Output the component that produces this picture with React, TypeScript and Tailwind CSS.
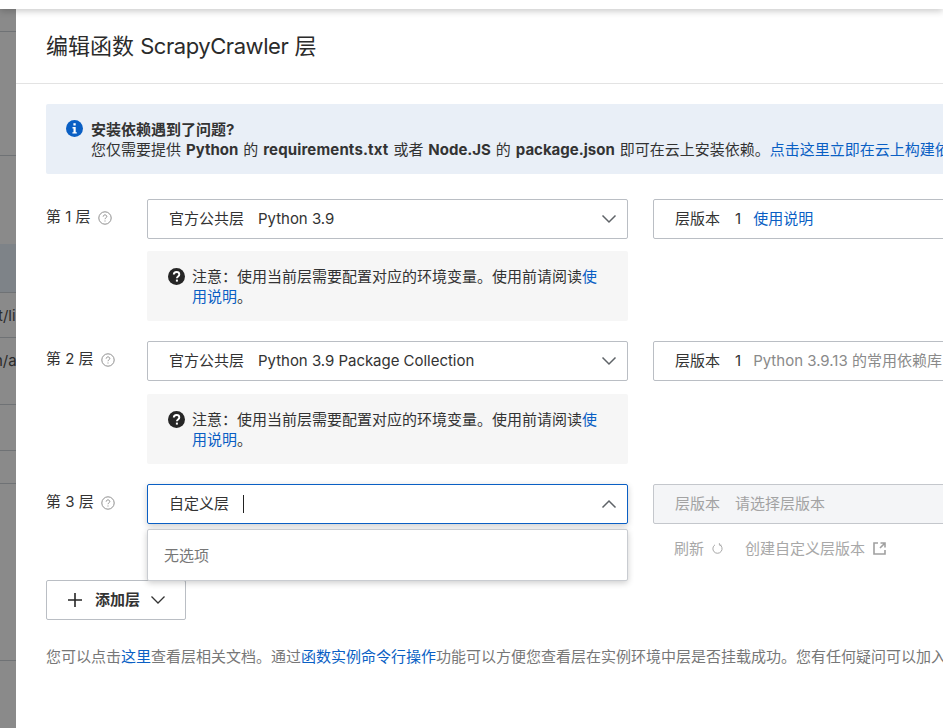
const font = { fontFamily: '"Inter", "Noto Sans CJK SC", sans-serif' }

const Chevron = ({ up = false }: { up?: boolean }) => (
  <svg width="16" height="10" viewBox="0 0 16 10" fill="none" stroke="#5f6368" strokeWidth="1.5">
    <path d={up ? 'M1.5 8.5 8 2l6.5 6.5' : 'M1.5 1.5 8 8l6.5-6.5'} />
  </svg>
)

const HelpDot = () => (
  <svg width="14" height="14" viewBox="0 0 14 14" fill="none" stroke="#8f8f8f" strokeWidth="1">
    <circle cx="7" cy="7" r="6.2" />
    <path d="M5.2 5.6c0-1 .8-1.7 1.8-1.7s1.8.7 1.8 1.6c0 1.3-1.8 1.3-1.8 2.7" />
    <path d="M7 9.5v1" />
  </svg>
)

const QuestionFill = () => (
  <svg width="17" height="17" viewBox="0 0 17 17" className="mt-[1px] shrink-0">
    <circle cx="8.5" cy="8.5" r="8.5" fill="#262626" />
    <path d="M5.8 6.6c0-1.6 1.2-2.6 2.8-2.6s2.7 1 2.7 2.4c0 2-2.4 2-2.4 3.8" fill="none" stroke="#fff" strokeWidth="1.9" />
    <rect x="7.9" y="11.6" width="2" height="2" fill="#fff" />
  </svg>
)

const InfoFill = () => (
  <svg width="17" height="17" viewBox="0 0 17 17" className="shrink-0">
    <circle cx="8.5" cy="8.5" r="8.5" fill="#0a5fc4" />
    <rect x="7.4" y="3.2" width="2.3" height="2.3" fill="#fff" />
    <path d="M6.5 7h3.2v5.2h1.1v1.4H6.4v-1.4h1.1V8.4h-1z" fill="#fff" />
  </svg>
)

const Field = ({ children, className }: { children: React.ReactNode; className: string }) => (
  <div className={`flex h-10 items-center rounded-[2px] border pr-[10px] pl-[21px] text-[15px] whitespace-nowrap ${className}`}>
    {children}
  </div>
)

const Note = ({ className }: { className: string }) => (
  <div className={`flex h-[70px] w-[481px] gap-[7px] rounded-[2px] bg-[#f6f6f6] py-4 pr-5 pl-[21px] text-[15px] leading-5 text-[#333] ${className}`}>
    <QuestionFill />
    <p>
      注意：使用当前层需要配置对应的环境变量。使用前请阅读<a className="text-[#0a5fc4]">使用说明</a>。
    </p>
  </div>
)

type LayerProps = {
  index: number
  kind: string
  name: string
  noteGap: string
  version: React.ReactNode
}

const Layer = ({ index, kind, name, noteGap, version }: LayerProps) => (
  <div className="flex">
    <Label index={index} />
    <div className="w-[481px] shrink-0">
      <Field className="justify-between border-[#babec4] bg-white text-[#333]">
        <span>
          {kind}
          <span className="ml-[14px] tracking-[-0.03px]">{name}</span>
        </span>
        <Chevron />
      </Field>
      <Note className={noteGap} />
    </div>
    <Field className="ml-[25px] w-[481px] shrink-0 border-[#babec4] bg-white text-[#333]">{version}</Field>
  </div>
)

const Label = ({ index }: { index: number }) => (
  <div className="flex h-10 w-[101px] shrink-0 items-center gap-[7px] pb-[3px] text-[15px] text-[#333]">
    第 {index} 层
    <HelpDot />
  </div>
)

const sideRows = [
  { h: 'h-[23px]', line: true },
  { h: 'h-[124px]', line: true },
  { h: 'h-[88px]', line: false },
  { h: 'h-[49px]', line: true, bg: 'bg-[#7e8388]' },
  { h: 'h-[45px]', line: true, text: 't/lib', pad: 'pt-[12px] -ml-[2px]' },
  { h: 'h-[67px]', line: true, text: 'n/a', pad: 'pt-[12px] -ml-[6px]' },
  { h: 'h-[46px]', line: true },
  { h: 'h-[33px]', line: true },
  { h: 'h-[177px]', line: true },
]

export default function App() {
  return (
    <div className="flex h-[728px] w-[943px] flex-col overflow-hidden bg-white" style={font}>
      <div className="relative z-10 h-[9px] shrink-0 bg-white shadow-[0_2px_7px_rgba(0,0,0,0.22)]" />
      <div className="flex min-h-0 flex-1">
        <aside className="w-4 shrink-0 overflow-hidden bg-[#8a8a8a] text-[15px] text-[#2b2b2b]">
          {sideRows.map((row, i) => (
            <div
              key={i}
              className={`${row.h} ${row.line ? 'border-b border-[#6f7275]' : ''} ${row.bg ?? ''} ${row.pad ?? ''} w-[30px] whitespace-nowrap`}
            >
              {row.text}
            </div>
          ))}
        </aside>

        <main className="min-w-0 flex-1 overflow-hidden">
          <header className="flex h-[75px] items-center border-b border-[#e3e3e3] pl-[30px] text-[22px] text-[#2b2b2b] whitespace-nowrap">
            <span>
              编辑函数 <span className="tracking-[-0.45px]">ScrapyCrawler</span> 层
            </span>
          </header>

          <div className="w-[1100px] pt-5 pl-[30px]">
            <div className="flex h-[70px] gap-2 rounded-[2px] bg-[#e9eff7] pt-4 pl-5 text-[15px] leading-5 whitespace-nowrap text-[#333]">
              <InfoFill />
              <div>
                <p className="font-bold">安装依赖遇到了问题?</p>
                <p className="[word-spacing:0.7px]">
                  您仅需要提供 <b>Python</b> 的 <b className="tracking-[0.15px]">requirements.txt</b> 或者 <b>Node.JS</b> 的{' '}
                  <b>package.json</b> 即可在云上安装依赖。<a className="text-[#0a5fc4]">点击这里立即在云上构建依赖层</a>
                </p>
              </div>
            </div>

            <div className="mt-[25px] flex flex-col gap-5">
              <Layer
                index={1}
                kind="官方公共层"
                name="Python 3.9"
                noteGap="mt-3"
                version={
                  <>
                    层版本<span className="mr-3 ml-[15px]">1</span>
                    <a className="text-[#0a5fc4]">使用说明</a>
                  </>
                }
              />
              <Layer
                index={2}
                kind="官方公共层"
                name="Python 3.9 Package Collection"
                noteGap="mt-[13px]"
                version={
                  <>
                    层版本<span className="mr-3 ml-[15px]">1</span>
                    <span className="text-[#8a8a8a]">Python 3.9.13 的常用依赖库</span>
                  </>
                }
              />

              <div className="flex h-[76px]">
                <Label index={3} />
                <div className="relative w-[481px] shrink-0">
                  <Field className="justify-between border-[#0a5fc4] bg-white text-[#333] shadow-[0_2px_6px_rgba(0,0,0,0.2)]">
                    <span className="flex items-center">
                      自定义层
                      <span className="ml-[14px] h-[18px] w-px bg-[#222]" />
                    </span>
                    <Chevron up />
                  </Field>
                  <div className="absolute top-[45px] left-0 z-10 flex h-[52px] w-full items-center rounded-[2px] border border-[#c9ccd1] bg-white px-4 pt-[2px] text-[15px] text-[#777] shadow-[0_2px_6px_rgba(0,0,0,0.2)]">
                    无选项
                  </div>
                </div>
                <div className="ml-[25px] w-[481px] shrink-0">
                  <Field className="border-[#c4c7cc] bg-[#f4f5f7] text-[#a3a3a3]">
                    层版本<span className="ml-[15px]">请选择层版本</span>
                  </Field>
                  <div className="mt-[14px] flex items-center pl-[21px] text-[15px] text-[#a8a8a8]">
                    刷新
                    <svg width="11" height="12" viewBox="0 0 11 12" fill="none" stroke="#a8a8a8" className="mr-[22px] ml-2">
                      <path d="M3 1.8a4.6 4.6 0 1 0 4.6-.2" />
                      <path d="M7.4 0v2.2h2.2" strokeWidth="0.8" />
                    </svg>
                    创建自定义层版本
                    <svg width="13" height="13" viewBox="0 0 13 13" fill="none" stroke="#a0a0a0" strokeWidth="1.6" className="mb-[2px] ml-2">
                      <path d="M5 1H1v11h11V8" />
                      <path d="M7.5 1H12v4.5M12 1 7 6" />
                    </svg>
                  </div>
                </div>
              </div>
            </div>

            <button
              type="button"
              className="mt-5 flex h-10 w-[140px] items-center rounded-[2px] border border-[#babec4] bg-white pl-[21px] text-[15px] font-semibold text-[#333]"
            >
              <svg width="14" height="14" viewBox="0 0 14 14" stroke="#262626" strokeWidth="1.6">
                <path d="M7 0v14M0 7h14" />
              </svg>
              <span className="ml-[13px]">添加层</span>
              <svg width="16" height="10" viewBox="0 0 16 10" fill="none" stroke="#333" strokeWidth="1.3" className="ml-[10px]">
                <path d="M1.5 1.5 8 8l6.5-6.5" />
              </svg>
            </button>

            <p className="mt-[27px] text-[15px] leading-5 whitespace-nowrap text-[#777]">
              您可以点击<a className="text-[#0a5fc4]">这里</a>查看层相关文档。通过
              <a className="text-[#0a5fc4]">函数实例命令行操作</a>
              功能可以方便您查看层在实例环境中层是否挂载成功。您有任何疑问可以加入我们的用户群
            </p>
          </div>
        </main>
      </div>
    </div>
  )
}
